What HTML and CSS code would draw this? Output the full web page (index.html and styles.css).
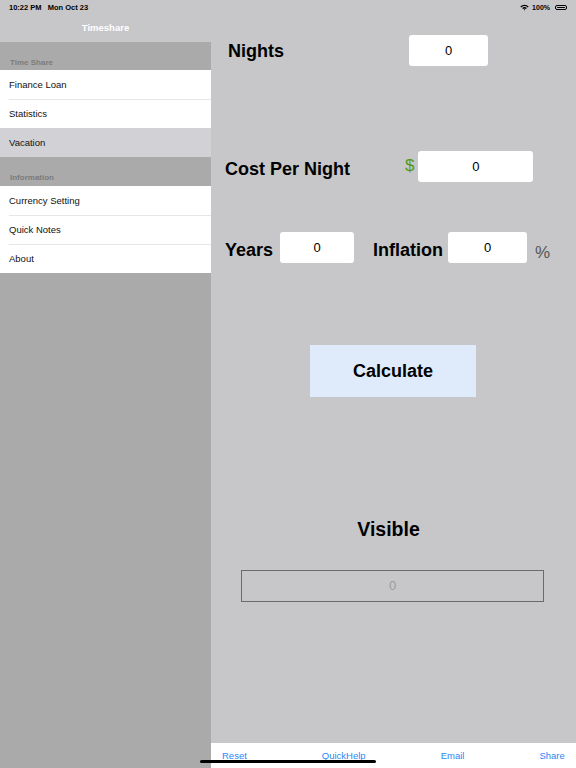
FILE: index.html
```html
<!DOCTYPE html>
<html lang="en">
<head>
    <meta charset="UTF-8">
    <meta name="viewport" content="width=device-width, initial-scale=1.0">
    <title>Timeshare</title>
    <link rel="stylesheet" href="styles.css">
</head>
<body>
    <div class="status-bar">
        <span class="status-time">10:22 PM&nbsp;&nbsp; Mon Oct 23</span>
        <span class="status-right">
            <svg width="9" height="7" viewBox="0 0 9 7">
                <path d="M0.3 2.4 A6 6 0 0 1 8.7 2.4 L7.7 3.4 A4.6 4.6 0 0 0 1.3 3.4 Z" fill="#000"/>
                <path d="M2.1 4.1 A3.5 3.5 0 0 1 6.9 4.1 L5.9 5.1 A2.1 2.1 0 0 0 3.1 5.1 Z" fill="#000"/>
                <path d="M3.8 5.8 L4.5 5.1 L5.2 5.8 L4.5 6.6 Z" fill="#000"/>
            </svg>
            <span>100%</span>
            <span class="battery"><span class="battery-fill"></span></span>
        </span>
    </div>

    <div class="app">
        <aside class="sidebar">
            <div class="sidebar-title">Timeshare</div>
            <div class="section-header">Time Share</div>
            <ul class="menu">
                <li>Finance Loan</li>
                <li>Statistics</li>
                <li class="selected">Vacation</li>
            </ul>
            <div class="section-header section-header-info">Information</div>
            <ul class="menu">
                <li>Currency Setting</li>
                <li>Quick Notes</li>
                <li>About</li>
            </ul>
        </aside>

        <main class="content">
            <div class="form">
                <div class="row row-nights">
                    <label class="label">Nights</label>
                    <div class="field field-nights">0</div>
                </div>
                <div class="row row-cost">
                    <label class="label">Cost Per Night</label>
                    <span class="dollar">$</span>
                    <div class="field field-cost">0</div>
                </div>
                <div class="row row-years">
                    <label class="label">Years</label>
                    <div class="field field-years">0</div>
                    <label class="label label-inflation">Inflation</label>
                    <div class="field field-inflation">0</div>
                    <span class="percent">%</span>
                </div>
                <div class="calc-wrap">
                    <button class="calc-btn" type="button">Calculate</button>
                </div>
                <div class="visible-title">Visible</div>
                <div class="output">0</div>
            </div>

            <nav class="toolbar">
                <a class="tool tool-reset">Reset</a>
                <a class="tool tool-help">QuickHelp</a>
                <a class="tool tool-email">Email</a>
                <a class="tool tool-share">Share</a>
            </nav>
        </main>
    </div>
    <div class="home-indicator"></div>
</body>
</html>
```

FILE: styles.css
```css
html, body {
    margin: 0;
    padding: 0;
    height: 100%;
}
body {
    font-family: "Liberation Sans", Arial, sans-serif;
    background-color: #c7c7c9;
    color: #000;
    overflow: hidden;
}
.status-bar {
    position: absolute;
    top: 0;
    left: 0;
    right: 0;
    height: 14px;
    display: flex;
    justify-content: space-between;
    align-items: center;
    padding: 0 9px;
    font-size: 7.5px;
    font-weight: bold;
    z-index: 2;
}
.status-right {
    display: flex;
    align-items: center;
    gap: 3px;
    font-size: 7px;
}
.battery {
    width: 12px;
    height: 5px;
    border: 1px solid #000;
    border-radius: 2px;
    padding: 1px;
    box-sizing: border-box;
    display: flex;
    margin-left: 2px;
}
.battery-fill {
    flex: 1;
    background: #000;
    border-radius: 1px;
}
.app {
    display: flex;
    height: 768px;
}
.sidebar {
    width: 211px;
    flex-shrink: 0;
    background-color: #aaaaaa;
}
.sidebar-title {
    height: 42px;
    box-sizing: border-box;
    padding-top: 22px;
    background-color: #c7c7c9;
    color: #fff;
    text-align: center;
    font-size: 9.5px;
    font-weight: bold;
}
.section-header {
    height: 28px;
    box-sizing: border-box;
    padding: 16px 0 0 10px;
    font-size: 8px;
    font-weight: bold;
    color: #7b7b7b;
}
.section-header-info {
    height: 29px;
}
.menu {
    list-style: none;
    margin: 0;
    padding: 0;
    background: #fff;
}
.menu li {
    height: 29px;
    line-height: 29px;
    padding-left: 9px;
    font-size: 9.5px;
    color: #111;
    position: relative;
}
.menu li + li::before {
    content: "";
    position: absolute;
    top: 0;
    left: 9px;
    right: 0;
    border-top: 1px solid #e6e6e6;
}
.menu li.selected {
    background-color: #d1d1d6;
}
.menu li.selected::before,
.menu li.selected + li::before {
    display: none;
}
.content {
    flex: 1;
    display: flex;
    flex-direction: column;
    justify-content: space-between;
}
.form {
    display: flex;
    flex-direction: column;
}
.row {
    display: flex;
    align-items: center;
    height: 31px;
}
.label {
    font-size: 18px;
    font-weight: bold;
}
.field {
    height: 31px;
    line-height: 31px;
    background: #fff;
    border-radius: 3px;
    text-align: center;
    font-size: 13px;
    box-sizing: border-box;
}
.row-nights {
    margin-top: 35px;
    padding-left: 17px;
}
.row-nights .label {
    position: relative;
    top: 1px;
}
.field-nights {
    width: 79px;
    margin-left: 125px;
}
.row-cost {
    margin-top: 85px;
    padding-left: 14px;
}
.row-cost .label {
    position: relative;
    top: 3px;
}
.dollar {
    font-size: 17px;
    color: #4f9a1d;
    margin-left: 55px;
    margin-right: 4px;
    position: relative;
    top: -1px;
}
.field-cost {
    width: 115px;
}
.row-years {
    margin-top: 50px;
    padding-left: 14px;
}
.row-years .label {
    position: relative;
    top: 3px;
}
.field-years {
    width: 74px;
    margin-left: 7px;
}
.label-inflation {
    margin-left: 19px;
}
.field-inflation {
    width: 79px;
    margin-left: 5px;
}
.percent {
    font-size: 17px;
    color: #555;
    margin-left: 8px;
    position: relative;
    top: 5px;
}
.calc-wrap {
    margin-top: 82px;
    padding-left: 99px;
}
.calc-btn {
    width: 166px;
    height: 52px;
    border: none;
    background-color: #dfeafb;
    font-family: inherit;
    font-size: 18px;
    font-weight: bold;
    color: #000;
    padding: 0;
}
.visible-title {
    margin-top: 121px;
    font-size: 19.5px;
    font-weight: bold;
    text-align: center;
    padding-right: 10px;
}
.output {
    margin: 29px 0 0 30px;
    width: 303px;
    height: 32px;
    line-height: 30px;
    box-sizing: border-box;
    border: 1px solid #6b6b6b;
    text-align: center;
    font-size: 13px;
    color: #9b9b9b;
}
.toolbar {
    height: 25px;
    background: #fff;
    display: flex;
    align-items: center;
    font-size: 9.5px;
}
.tool {
    color: #2d86f7;
}
.tool-reset {
    margin-left: 11px;
}
.tool-help {
    margin-left: 75px;
}
.tool-email {
    margin-left: 75px;
}
.tool-share {
    margin-left: 75px;
}
.home-indicator {
    position: absolute;
    left: 200px;
    top: 760px;
    width: 176px;
    height: 3px;
    border-radius: 2px;
    background: #000;
}
```
